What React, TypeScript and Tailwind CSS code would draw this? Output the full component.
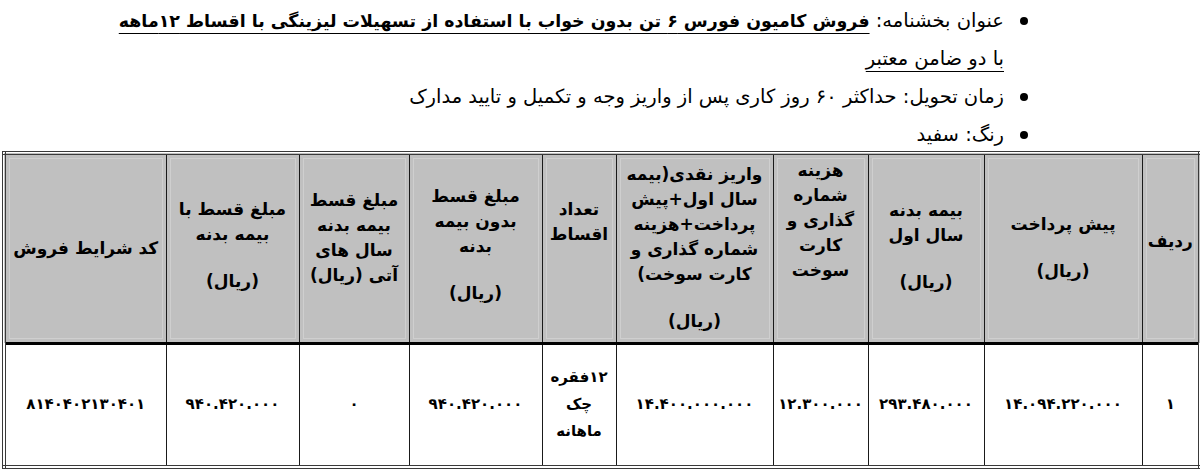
import React from "react";

const font = { fontFamily: '"DejaVu Sans", sans-serif' };

type H = { lines: string[]; rial?: boolean; pb: string };

const headers: H[] = [
  { lines: ["ردیف"], pb: "pb-[14px]" },
  { lines: ["پیش پرداخت"], rial: true, pb: "pb-0" },
  { lines: ["بیمه بدنه", "سال اول"], rial: true, pb: "pb-[4px]" },
  { lines: ["هزینه", "شماره", "گذاری و", "کارت", "سوخت"], pb: "pb-[56px]" },
  { lines: ["واریز نقدی(بیمه", "سال اول+پیش", "پرداخت+هزینه", "شماره گذاری و", "کارت سوخت)"], rial: true, pb: "pb-0" },
  { lines: ["تعداد", "اقساط"], pb: "pb-[52px]" },
  { lines: ["مبلغ قسط", "بدون بیمه", "بدنه"], rial: true, pb: "pb-[6px]" },
  { lines: ["مبلغ قسط", "بیمه بدنه", "سال های", "آتی (ریال)"], pb: "pb-[20px]" },
  { lines: ["مبلغ قسط با", "بیمه بدنه"], rial: true, pb: "pb-[6px]" },
  { lines: ["کد شرایط فروش"], pb: "pb-0" },
];

const widths = ["w-[58px]", "w-[158px]", "w-[116px]", "w-[95px]", "w-[157px]", "w-[74px]", "w-[133px]", "w-[110px]", "w-[133px]", "w-[162px]"];

const data: string[][] = [
  ["۱"],
  ["۱۴.۰۹۴.۲۲۰.۰۰۰"],
  ["۲۹۳.۴۸۰.۰۰۰"],
  ["۱۲.۳۰۰.۰۰۰"],
  ["۱۴.۴۰۰.۰۰۰.۰۰۰"],
  ["۱۲فقره", "چک", "ماهانه"],
  ["۹۴۰.۴۲۰.۰۰۰"],
  ["۰"],
  ["۹۴۰.۴۲۰.۰۰۰"],
  ["۸۱۴۰۴۰۲۱۳۰۴۰۱"],
];

export default function App() {
  return (
    <div className="w-[1200px] h-[474px] bg-white text-black overflow-hidden" style={font}>
      <div dir="rtl" className="pr-[172px] pt-[2px] text-[19.5px] leading-[38px] h-[151px]">
        <div className="flex items-center gap-[16px]">
          <span className="w-[8px] h-[8px] rounded-full bg-black shrink-0" />
          <span className="whitespace-nowrap">
            عنوان بخشنامه:{" "}
            <span className="font-bold text-[17.4px] underline underline-offset-[6px]">
              فروش کامیون فورس ۶ تن بدون خواب با استفاده از تسهیلات لیزینگی با اقساط ۱۲ماهه
            </span>
          </span>
        </div>
        <div className="pr-[24px]">
          <span className="underline underline-offset-[6px]">با دو ضامن معتبر</span>
        </div>
        <div className="flex items-center gap-[16px]">
          <span className="w-[8px] h-[8px] rounded-full bg-black shrink-0" />
          <span className="whitespace-nowrap">زمان تحویل: حداکثر ۶۰ روز کاری پس از واریز وجه و تکمیل و تایید مدارک</span>
        </div>
        <div className="flex items-center gap-[16px]">
          <span className="w-[8px] h-[8px] rounded-full bg-black shrink-0" />
          <span>رنگ: سفید</span>
        </div>
      </div>
      <div className="pl-[2px] pr-[1px]">
        <table dir="rtl" className="w-[1197px] table-fixed border-collapse border-[4px] border-double border-[#3a3a3a]">
          <colgroup>
            {widths.map((w, i) => (
              <col key={i} className={w} />
            ))}
          </colgroup>
          <thead>
            <tr className="h-[190px]">
              {headers.map((h, i) => (
                <th
                  key={i}
                  className={`bg-[#c0c0c0] border border-[#1a1a1a] border-b-[3px] border-b-black align-middle text-center font-bold text-[17px] leading-[25px] px-1 shadow-[inset_0_0_0_3px_#c0c0c0,inset_0_0_0_4px_#cfcfcf] ${h.pb}`}
                >
                  {h.lines.map((l, j) => (
                    <div key={j} className="whitespace-nowrap">{l}</div>
                  ))}
                  {h.rial && <div className="mt-[22px] font-semibold">(ریال)</div>}
                </th>
              ))}
            </tr>
          </thead>
          <tbody>
            <tr className="h-[124px]">
              {data.map((d, i) => (
                <td key={i} className="border border-[#1a1a1a] text-center align-middle font-bold text-[15px] leading-[27px]">
                  {d.map((l, j) => (
                    <div key={j} className="whitespace-nowrap">{l}</div>
                  ))}
                </td>
              ))}
            </tr>
          </tbody>
        </table>
      </div>
    </div>
  );
}
